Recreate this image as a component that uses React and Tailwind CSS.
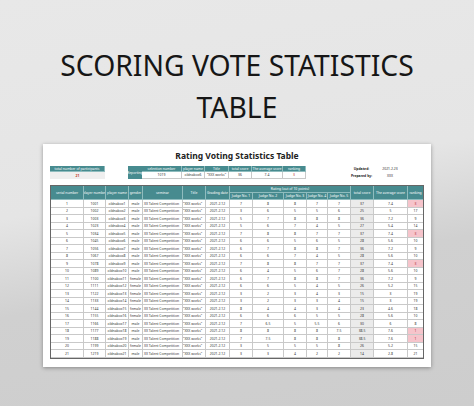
const cols = "grid grid-cols-[33px_22px_23px_14px_40px_23px_24px_23px_31px_23px_21px_23px_23px_34px_15px]";

const genders = ["male","male","male","male","male","male","male","male","male","male","female","female","female","female","female","female","male","male","male","female","male"];
const numbers = ["1001","1002","1003","1023","1034","1045","1056","1067","1078","1089","1100","1111","1122","1133","1144","1155","1166","1177","1188","1199","1219"];
const judges = [
  [7,8,8,7,7],[3,6,5,5,6],[5,7,8,8,8],[5,6,7,4,5],[7,8,8,7,7],[6,6,5,6,5],[6,7,8,8,7],
  [6,6,7,4,5],[7,8,8,7,7],[6,4,5,6,7],[6,7,8,8,7],[6,6,5,4,5],[3,2,3,4,3],[3,2,3,3,4],
  [8,4,4,3,4],[6,6,6,5,5],[7,6.5,5,5.5,6],[8,8,8,8,7.5],[7,7.5,8,8,8],[3,5,5,5,8],[3,3,4,2,2],
];
const totals = ["37","25","36","27","37","28","36","28","37","28","36","26","15","15","23","28","30","38.5","38.5","26","14"];
const avgs = ["7.4","5","7.2","5.4","7.4","5.6","7.2","5.6","7.4","5.6","7.2","5.2","3","3","4.6","5.6","6","7.6","7.6","5.2","2.8"];
const ranks = [3,17,9,14,3,10,9,10,3,10,9,15,19,19,18,10,8,1,1,15,21];

const cell = "flex items-center justify-center overflow-hidden whitespace-nowrap border-r border-b border-[#c9c9c9]";
const head = "flex items-center justify-center overflow-hidden whitespace-nowrap bg-[#478b8f] text-white border-r border-b border-[#8fbcbe]";

export default function App() {
  return (
    <div className="w-[474px] h-[406px] overflow-hidden bg-[linear-gradient(170deg,#e8e8e8_0%,#e5e5e5_45%,#d0d0d0_65%,#cdcdcd_100%)] font-['Noto_Sans',sans-serif]">
      <h1 className="pt-[44px] text-center text-[28.3px] leading-[42px] font-normal text-[#161616]">
        SCORING VOTE STATISTICS<br />TABLE
      </h1>
      <div className="ml-[43px] mt-[16px] w-[388px] bg-white pt-[7px] pb-[8px] pl-[7px] shadow-[0_1px_4px_rgba(0,0,0,0.35)]">
        <div className="-ml-[7px] text-center text-[8.5px] leading-[10px] font-bold text-[#222]">Rating Voting Statistics Table</div>

        <div className={`${cols} mt-[5px] grid-rows-[6px_7px] text-[3.4px] text-[#333]`}>
          <div className={`${head} col-start-1 col-span-2 row-start-1`}>total number of participants</div>
          <div className="col-start-1 col-span-2 row-start-2 flex items-center justify-center bg-[#efefef] font-bold text-[#c0392b]">21</div>
          <div className="col-start-4 row-start-1 row-span-2 flex items-center justify-center bg-[#478b8f] text-white">Reporting</div>
          <div className={`${head} col-start-5 row-start-1`}>selection number</div>
          <div className={`${head} col-start-6 row-start-1`}>player name</div>
          <div className={`${head} col-start-7 row-start-1`}>Title</div>
          <div className={`${head} col-start-8 row-start-1`}>total score</div>
          <div className={`${head} col-start-9 row-start-1`}>The average score</div>
          <div className={`${head} col-start-10 row-start-1`}>ranking</div>
          <div className={`${cell} col-start-5 row-start-2`}>1019</div>
          <div className={`${cell} col-start-6 row-start-2`}>oldnabox6</div>
          <div className={`${cell} col-start-7 row-start-2`}>"XXX works"</div>
          <div className={`${cell} col-start-8 row-start-2`}>36</div>
          <div className={`${cell} col-start-9 row-start-2`}>7.4</div>
          <div className={`${cell} col-start-10 row-start-2 text-[#c0392b]`}>3</div>
          <div className="col-start-13 row-start-1 flex items-center justify-center font-bold text-[#222]">Updated:</div>
          <div className="col-start-14 row-start-1 flex items-center justify-center">2021.2.23</div>
          <div className="col-start-13 row-start-2 flex items-center justify-center font-bold text-[#222]">Prepared by:</div>
          <div className="col-start-14 row-start-2 flex items-center justify-center">XXX</div>
        </div>

        <div className="mt-[6px] w-[374px] border border-[#666] text-[3.4px] text-[#333]">
          <div className={`${cols} grid-rows-[7px_7px]`}>
            <div className={`${head} col-start-1 row-start-1 row-span-2`}>serial number</div>
            <div className={`${head} col-start-2 row-start-1 row-span-2`}>player number</div>
            <div className={`${head} col-start-3 row-start-1 row-span-2`}>player name</div>
            <div className={`${head} col-start-4 row-start-1 row-span-2`}>gender</div>
            <div className={`${head} col-start-5 row-start-1 row-span-2`}>seminar</div>
            <div className={`${head} col-start-6 row-start-1 row-span-2`}>Title</div>
            <div className={`${head} col-start-7 row-start-1 row-span-2`}>Grading date</div>
            <div className={`${head} col-start-8 col-span-5 row-start-1`}>Rating (out of 10 points)</div>
            <div className={`${head} col-start-8 row-start-2`}>Judge No. 1</div>
            <div className={`${head} col-start-9 row-start-2`}>Judge No. 2</div>
            <div className={`${head} col-start-10 row-start-2`}>Judge No. 3</div>
            <div className={`${head} col-start-11 row-start-2`}>Judge No. 4</div>
            <div className={`${head} col-start-12 row-start-2`}>Judge No. 5</div>
            <div className={`${head} col-start-13 row-start-1 row-span-2`}>total score</div>
            <div className={`${head} col-start-14 row-start-1 row-span-2`}>The average score</div>
            <div className={`${head} col-start-15 row-start-1 row-span-2 border-r-0`}>ranking</div>
          </div>
          {judges.map((j, i) => {
            const pink = ranks[i] <= 3;
            return (
              <div key={i} className={`${cols} h-[7.5px]`}>
                <div className={cell}>{i + 1}</div>
                <div className={cell}>{numbers[i]}</div>
                <div className={cell}>oldnabox{i + 1}</div>
                <div className={cell}>{genders[i]}</div>
                <div className={`${cell} justify-start pl-[1px]`}>XX Talent Competition</div>
                <div className={`${cell} justify-start`}>"XXX works"</div>
                <div className={cell}>2021.2.12</div>
                {j.map((v, k) => (
                  <div key={k} className={cell}>{v}</div>
                ))}
                <div className={`${cell} bg-[#ebebeb]`}>{totals[i]}</div>
                <div className={cell}>{avgs[i]}</div>
                <div className={`${cell} border-r-0 ${pink ? "bg-[#f6c4cb] text-[#b03040]" : ""}`}>{ranks[i]}</div>
              </div>
            );
          })}
        </div>
      </div>
    </div>
  );
}
